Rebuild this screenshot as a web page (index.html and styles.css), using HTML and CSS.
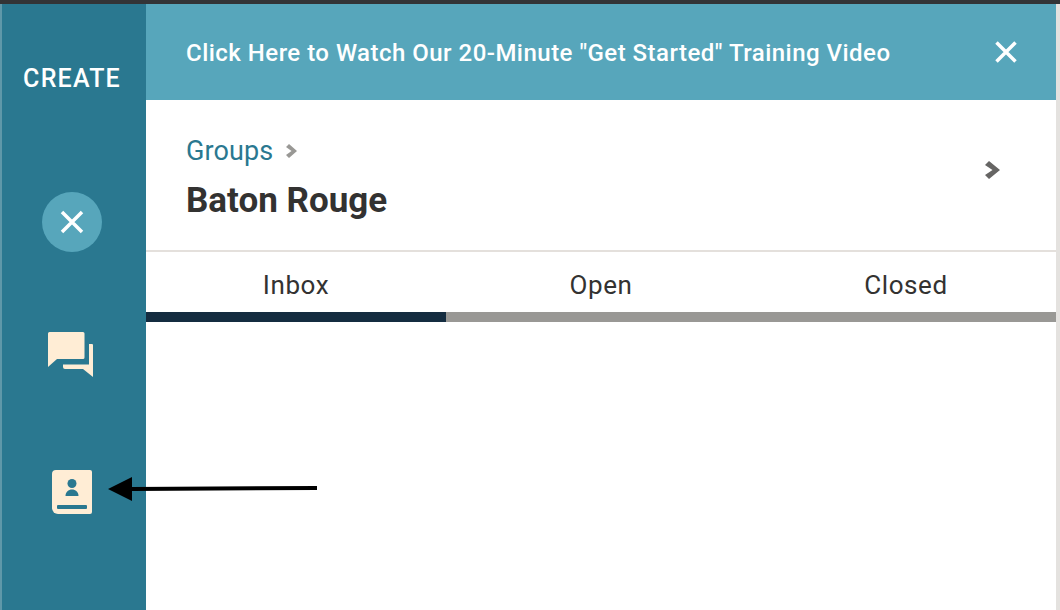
FILE: index.html
```html
<!DOCTYPE html>
<html lang="en">
<head>
    <meta charset="UTF-8">
    <title>Baton Rouge</title>
    <link rel="stylesheet" href="styles.css">
</head>
<body>
    <div class="top-line"></div>
    <div class="app">
        <!-- left menu -->
        <nav class="side">
            <div class="create">CREATE</div>
            <div class="close-circle">
                <svg width="24" height="24" viewBox="0 0 24 24"><path d="M2 2L22 22M22 2L2 22" class="x-line"/></svg>
            </div>
            <svg class="chat-icon" width="45" height="45" viewBox="0 0 45 45">
                <path d="M1.5 0H35a1.5 1.5 0 0 1 1.5 1.5V25.5a1.5 1.5 0 0 1-1.5 1.5H9L0 35V1.5A1.5 1.5 0 0 1 1.5 0z"/>
                <path d="M41 12H44a1 1 0 0 1 1 1V45L35 37H17a2 2 0 0 1-2-2V32.500H41z"/>
            </svg>
            <svg class="book-icon" width="40" height="44" viewBox="0 0 40 44">
                <path class="book-page" d="M4 0H38a2 2 0 0 1 2 2V42a2 2 0 0 1-2 2H6a6 6 0 0 1-6-6V4a4 4 0 0 1 4-4z"/>
                <circle class="book-mark" cx="20" cy="13.500" r="4.500"/>
                <path class="book-mark" d="M13.500 26c0-4 3-6.500 6.500-6.500s6.500 2.500 6.500 6.500z"/>
                <rect class="book-mark" x="5" y="35" width="30" height="4" rx="1"/>
            </svg>
        </nav>

        <main class="main">
            <div class="banner">
                <a class="banner-text">Click Here to Watch Our 20-Minute "Get Started" Training Video</a>
                <svg width="22" height="22" viewBox="0 0 22 22"><path d="M1.500 1.500L20.500 20.500M20.500 1.500L1.500 20.500" class="x-line"/></svg>
            </div>

            <div class="head">
                <div>
                    <div class="crumb">
                        <span>Groups</span>
                        <svg width="11" height="14" viewBox="0 0 11 14"><path d="M0 3L3 0L11 7L3 14L0 11L5.500 7z" fill="#999895"/></svg>
                    </div>
                    <h1 class="title">Baton Rouge</h1>
                </div>
                <svg class="head-arrow" width="15" height="18" viewBox="0 0 15 18"><path d="M0 4L4 0L15 9L4 18L0 14L7.500 9z" fill="#666564"/></svg>
            </div>

            <div class="tabs">
                <div class="tab tab-on">Inbox</div>
                <div class="tab tab-mid">Open</div>
                <div class="tab">Closed</div>
            </div>
        </main>
    </div>

    <!-- arrow drawn on top of the screenshot -->
    <svg class="pointer" width="212" height="30" viewBox="0 0 212 30">
        <path d="M0 15L24 3V13L209 12V16L24 17V27z"/>
    </svg>
</body>
</html>
```

FILE: styles.css
```css
html, body{
    margin:0;
    height:610px;
    overflow:hidden;
    background:#fff;
}
body{
    position:relative;
    font-family:"Roboto", "Liberation Sans", sans-serif;
    color:#333231;
}
.top-line{
    height:4px;
    background:#333436;
}
.app{
    display:flex;
    height:606px;
}
.side{
    width:140px;
    border-left:2px solid #5f98a9;
    padding-right:4px;
    background:#2a7890;
    display:flex;
    flex-direction:column;
    align-items:center;
}
.create{
    margin-top:59px;
    color:#fff;
    font-size:25px;
    line-height:32px;
    font-weight:500;
    letter-spacing:1.2px;
}
.close-circle{
    margin-top:97px;
    width:60px;
    height:60px;
    border-radius:50%;
    background:#57a6bb;
    display:flex;
    align-items:center;
    justify-content:center;
}
.x-line{
    stroke:#fff;
    stroke-width:3.500;
    fill:none;
}
.chat-icon{
    margin-top:80px;
    margin-right:3px;
    fill:#ffedd5;
}
.book-icon{
    margin-top:93px;
}
.book-page{
    fill:#ffedd5;
}
.book-mark{
    fill:#2a7890;
}
.main{
    flex:1;
    border-right:4px solid #e4e2df;
}
.banner{
    height:96px;
    background:#57a6bb;
    padding:0 39px 0 40px;
    display:flex;
    align-items:center;
    justify-content:space-between;
    color:#fff;
}
.banner-text{
    padding-top:2px;
    font-size:24px;
    font-weight:500;
    letter-spacing:.48px;
}
.head{
    height:116px;
    padding:34px 56px 0 40px;
    display:flex;
    align-items:flex-start;
    justify-content:space-between;
    border-bottom:2px solid #e4e0dc;
}
.crumb{
    display:flex;
    align-items:center;
    gap:13px;
    font-size:27px;
    line-height:34px;
    letter-spacing:.1px;
    color:#2a7890;
}
.title{
    margin:13px 0 0;
    font-size:35px;
    line-height:40px;
    font-weight:700;
    color:#333231;
}
.head-arrow{
    margin-top:27px;
}
.tabs{
    display:grid;
    grid-template-columns:300px 310px 300px;
}
.tab{
    height:60px;
    line-height:66px;
    text-align:center;
    font-size:26px;
    letter-spacing:.6px;
    border-bottom:10px solid #999895;
}
.tab-on{
    border-bottom-color:#142c40;
}
.pointer{
    position:absolute;
    left:108px;
    top:474px;
    fill:#000;
}
```
